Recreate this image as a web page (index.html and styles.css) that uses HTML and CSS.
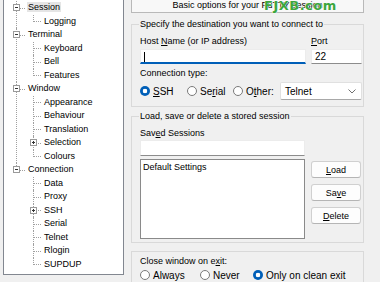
FILE: index.html
```html
<!DOCTYPE html>
<html lang="en">
<head>
    <meta charset="UTF-8">
    <title>PuTTY Configuration</title>
    <link rel="stylesheet" href="styles.css">
</head>
<body>

<div class="window">
    <div class="category-pane">
        <ul class="tree">
            <li>
                <div class="item"><span class="exp"></span><span class="label selected">Session</span></div>
                <ul>
                    <li><div class="item"><span class="label">Logging</span></div></li>
                </ul>
            </li>
            <li>
                <div class="item"><span class="exp"></span><span class="label">Terminal</span></div>
                <ul>
                    <li><div class="item"><span class="label">Keyboard</span></div></li>
                    <li><div class="item"><span class="label">Bell</span></div></li>
                    <li><div class="item"><span class="label">Features</span></div></li>
                </ul>
            </li>
            <li>
                <div class="item"><span class="exp"></span><span class="label">Window</span></div>
                <ul>
                    <li><div class="item"><span class="label">Appearance</span></div></li>
                    <li><div class="item"><span class="label">Behaviour</span></div></li>
                    <li><div class="item"><span class="label">Translation</span></div></li>
                    <li><div class="item"><span class="exp closed"></span><span class="label">Selection</span></div></li>
                    <li><div class="item"><span class="label">Colours</span></div></li>
                </ul>
            </li>
            <li>
                <div class="item"><span class="exp"></span><span class="label">Connection</span></div>
                <ul>
                    <li><div class="item"><span class="label">Data</span></div></li>
                    <li><div class="item"><span class="label">Proxy</span></div></li>
                    <li><div class="item"><span class="exp closed"></span><span class="label">SSH</span></div></li>
                    <li><div class="item"><span class="label">Serial</span></div></li>
                    <li><div class="item"><span class="label">Telnet</span></div></li>
                    <li><div class="item"><span class="label">Rlogin</span></div></li>
                    <li><div class="item"><span class="label">SUPDUP</span></div></li>
                </ul>
            </li>
        </ul>
    </div>

    <div class="panel">
        <div class="banner">Basic options for your PuTTY session</div>

        <fieldset class="group destination">
            <legend>Specify the destination you want to connect to</legend>
            <div class="host-grid">
                <label>Host <u>N</u>ame (or IP address)</label>
                <label><u>P</u>ort</label>
                <div class="edit focused"><span class="caret"></span></div>
                <div class="edit">22</div>
            </div>
            <div class="caption">Connection type:</div>
            <div class="conn-row">
                <span class="option"><span class="radio checked"></span><span><u>S</u>SH</span></span>
                <span class="option"><span class="radio"></span><span>Se<u>r</u>ial</span></span>
                <span class="option"><span class="radio"></span><span>O<u>t</u>her:</span></span>
                <div class="combo">
                    <span>Telnet</span>
                    <svg width="8" height="5" viewBox="0 0 8 5"><path d="M0.5 0.5 L4 4 L7.5 0.5" fill="none" stroke="#606060" stroke-width="0.9"/></svg>
                </div>
            </div>
        </fieldset>

        <fieldset class="group sessions">
            <legend>Load, save or delete a stored session</legend>
            <div class="caption">Sav<u>e</u>d Sessions</div>
            <div class="edit saved-name"></div>
            <div class="session-row">
                <div class="listbox">
                    <div class="list-item">Default Settings</div>
                </div>
                <div class="buttons">
                    <button><u>L</u>oad</button>
                    <button>Sa<u>v</u>e</button>
                    <button><u>D</u>elete</button>
                </div>
            </div>
        </fieldset>

        <fieldset class="group close-exit">
            <div class="caption">Close window on e<u>x</u>it:</div>
            <div class="exit-row">
                <span class="option"><span class="radio"></span><span>Always</span></span>
                <span class="option"><span class="radio"></span><span>Never</span></span>
                <span class="option"><span class="radio checked"></span><span>Only on clean exit</span></span>
            </div>
        </fieldset>
    </div>
</div>

<div class="watermark">FJXB.com</div>

</body>
</html>
```

FILE: styles.css
```css
:root {
    --dialog-bg: #f0f0f0;
    --tree-line: #a0a0a0;
    --accent: #005fb8;
    --group-border: #d9d9d9;
}

body {
    margin: 0;
    width: 380px;
    height: 282px;
    overflow: hidden;
    background: var(--dialog-bg);
    color: #000000;
    font-family: "Liberation Sans", Arial, sans-serif;
    font-size: 9px;
    position: relative;
}

u {
    text-decoration-thickness: 1px;
    text-underline-offset: 1px;
}

.window {
    display: flex;
    align-items: flex-start;
    gap: 7px;
    padding-left: 3px;
}

/* category tree */
.category-pane {
    width: 119px;
    height: 274px;
    margin-top: -1px;
    background: #ffffff;
    border: 1px solid #828790;
}

.tree, .tree ul {
    list-style: none;
    margin: 0;
}
.tree {
    padding: 1px 0 0 12px;
}
.tree ul {
    padding-left: 6px;
}
.tree li {
    position: relative;
    padding-left: 11px;
}
.tree ul li {
    padding-left: 10px;
}
.tree li::before {
    content: "";
    position: absolute;
    left: 0;
    top: 0;
    bottom: 0;
    border-left: 1px dotted var(--tree-line);
}
.tree > li:last-child::before,
.tree ul li:last-child::before {
    bottom: auto;
    height: 7px;
}
.item {
    position: relative;
    height: 13.5px;
    line-height: 13.5px;
    white-space: nowrap;
}
.item::before {
    content: "";
    position: absolute;
    left: -11px;
    top: 6.5px;
    width: 9px;
    border-top: 1px dotted var(--tree-line);
}
.tree ul .item::before {
    left: -10px;
    width: 8px;
}
.label {
    padding: 0 1px;
}
.label.selected {
    background: #e5e5e5;
}

.exp {
    position: absolute;
    left: -14px;
    top: 3px;
    width: 5px;
    height: 5px;
    border: 1px solid #9a9a9a;
    background: #ffffff;
    z-index: 1;
}
.tree ul .exp {
    left: -13px;
}
.exp::before {
    content: "";
    position: absolute;
    left: 1px;
    top: 2px;
    width: 3px;
    height: 1px;
    background: #333333;
}
.exp.closed::after {
    content: "";
    position: absolute;
    left: 2px;
    top: 1px;
    width: 1px;
    height: 3px;
    background: #333333;
}

/* right side */
.panel {
    width: 233px;
}

.banner {
    margin-top: -2px;
    line-height: 13px;
    text-align: center;
    border: 1px solid #b9b9b9;
    background: #f8f8f8;
}

.group {
    margin: 0;
    padding: 0 1px 6px 8px;
    border: 1px solid var(--group-border);
    min-width: 0;
}
.group legend {
    padding: 0 1px;
    margin-left: -1px;
    line-height: 11px;
}

.destination {
    margin-top: 6px;
}
.host-grid {
    display: grid;
    grid-template-columns: 166px 51px;
    column-gap: 5px;
    row-gap: 2px;
    margin-top: 6px;
}
.host-grid label,
.caption {
    line-height: 11px;
}

.edit {
    box-sizing: border-box;
    height: 15px;
    padding-left: 3px;
    line-height: 14px;
    font-size: 10px;
    background: #ffffff;
    border: 1px solid #ececec;
    border-bottom-color: #8c8c8c;
}
.edit.focused {
    border-bottom: 2px solid var(--accent);
}
.caret {
    display: inline-block;
    width: 1px;
    height: 10px;
    margin-top: 2px;
    background: #000000;
    vertical-align: top;
}

.destination .caption {
    margin-top: 4px;
}
.conn-row {
    display: grid;
    grid-template-columns: 47px 46px 47px 82px;
    align-items: center;
    margin-top: 3px;
    height: 18px;
    font-size: 10px;
}
.option {
    display: flex;
    align-items: center;
    gap: 3px;
    white-space: nowrap;
}
.radio {
    flex: none;
    box-sizing: border-box;
    width: 10px;
    height: 10px;
    border: 1px solid #7a7a7a;
    border-radius: 50%;
    background: #ffffff;
}
.radio.checked {
    border: none;
    background: radial-gradient(circle, #ffffff 0 2px, var(--accent) 2.6px);
}
.combo {
    box-sizing: border-box;
    height: 18px;
    display: flex;
    align-items: center;
    justify-content: space-between;
    padding: 0 5px 0 4px;
    background: #ffffff;
    border: 1px solid #e0e0e0;
    border-bottom-color: #a8a8a8;
    border-radius: 2px;
}

.sessions {
    margin-top: 4px;
    padding-bottom: 3px;
}
.sessions .caption {
    margin-top: 6px;
}
.saved-name {
    height: 16px;
    margin-top: 1px;
    width: 165px;
}
.session-row {
    display: flex;
    gap: 6px;
    margin-top: 3px;
}
.listbox {
    box-sizing: border-box;
    width: 165px;
    height: 80px;
    padding: 2px 2px;
    background: #ffffff;
    border: 1px solid #8a8a8a;
}
.list-item {
    line-height: 11px;
}
.buttons {
    display: flex;
    flex-direction: column;
    gap: 6px;
    margin-top: 2px;
}
button {
    box-sizing: border-box;
    width: 50px;
    height: 17px;
    padding: 0;
    font-family: inherit;
    font-size: 9px;
    color: #000000;
    background: #fdfdfd;
    border: 1px solid #d0d0d0;
    border-bottom-color: #b5b5b5;
    border-radius: 3px;
}

.close-exit {
    margin-top: 8px;
    padding-top: 4px;
}
.exit-row {
    display: grid;
    grid-template-columns: 60px 53px auto;
    align-items: center;
    margin-top: 2px;
    height: 12px;
    font-size: 10px;
}

.watermark {
    position: absolute;
    left: 264px;
    top: -2px;
    font-family: "DejaVu Sans", sans-serif;
    font-size: 13px;
    font-weight: bold;
    line-height: 15px;
    color: #3da63d;
    text-shadow: 0 0 1px #ffffff, 0 0 1px #ffffff;
    letter-spacing: 0.5px;
}
```
